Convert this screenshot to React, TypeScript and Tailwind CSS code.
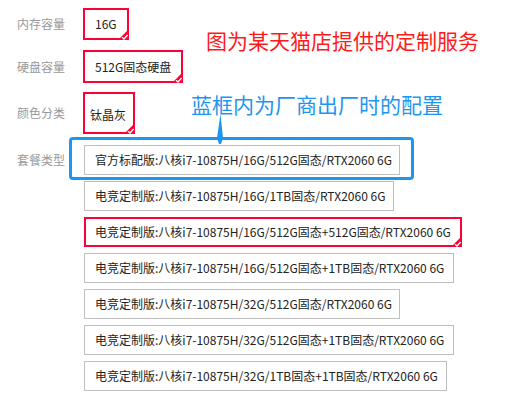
import React from "react";

const RED = "#ff0036";

function Check() {
  return (
    <svg
      className="absolute right-[-2px] bottom-[-2px]"
      width="12"
      height="12"
      viewBox="0 0 12 12"
    >
      <path d="M12 1 L12 12 L1 12 Z" fill={RED} />
      <path d="M5 9.2 L7 11 L10.6 7" stroke="#fff" strokeWidth="1.3" fill="none" />
    </svg>
  );
}

function Label({ children }: { children: React.ReactNode }) {
  return <div className="w-[66px] shrink-0 text-[12px] text-[#999]">{children}</div>;
}

const options = [
  { t: "官方标配版:八核i7-10875H/16G/512G固态/RTX2060 6G", w: 316, sel: false },
  { t: "电竞定制版:八核i7-10875H/16G/1TB固态/RTX2060 6G", w: 310, sel: false },
  { t: "电竞定制版:八核i7-10875H/16G/512G固态+512G固态/RTX2060 6G", w: 378, sel: true },
  { t: "电竞定制版:八核i7-10875H/16G/512G固态+1TB固态/RTX2060 6G", w: 370, sel: false },
  { t: "电竞定制版:八核i7-10875H/32G/512G固态/RTX2060 6G", w: 316, sel: false },
  { t: "电竞定制版:八核i7-10875H/32G/512G固态+1TB固态/RTX2060 6G", w: 370, sel: false },
  { t: "电竞定制版:八核i7-10875H/32G/1TB固态+1TB固态/RTX2060 6G", w: 363, sel: false },
];

export default function App() {
  return (
    <div
      className="relative w-[509px] h-[394px] overflow-hidden bg-white text-[#222]"
      style={{ fontFamily: "'Noto Sans CJK SC', 'Noto Sans', sans-serif" }}
    >
      <div className="flex flex-col pl-[17px] pt-[8px]">
        <div className="flex items-center h-[32px]">
          <Label>内存容量</Label>
          <div className="relative flex items-center h-[32px] border-2 border-[#ff0036] px-[10px] text-[12px]">
            16G
            <Check />
          </div>
        </div>
        <div className="flex items-center h-[33px] mt-[10px]">
          <Label>硬盘容量</Label>
          <div className="relative flex items-center h-[33px] border-2 border-[#ff0036] px-[10px] text-[12px]">
            512G固态硬盘
            <Check />
          </div>
        </div>
        <div className="flex items-center h-[42px] mt-[9px]">
          <Label>颜色分类</Label>
          <div className="relative flex items-center h-[42px] w-[52px] border-2 border-[#ff0036] pl-[5px] pt-[3px] text-[12px]">
            钛晶灰
            <Check />
          </div>
        </div>
        <div className="flex mt-[11px]">
          <div className="pt-[6px]">
            <Label>套餐类型</Label>
          </div>
          <div className="flex flex-col gap-[6px] ml-[1px]">
            {options.map((o, i) => (
              <div
                key={i}
                className={
                  o.sel
                    ? "relative flex items-center h-[30px] border-2 border-[#ff0036] pl-[9px] text-[12px] whitespace-nowrap"
                    : "relative flex items-center h-[30px] border border-[#bdbdbd] pl-[10px] text-[12px] whitespace-nowrap"
                }
                style={{ width: o.w }}
              >
                {o.t}
                {o.sel && <Check />}
              </div>
            ))}
          </div>
        </div>
      </div>

      {/* annotations */}
      <div className="absolute left-[206px] top-[28px] text-[21px] leading-[24px] text-[#ff1a1a] whitespace-nowrap">
        图为某天猫店提供的定制服务
      </div>
      <div className="absolute left-[191px] top-[92px] text-[21px] leading-[24px] text-[#1e96ef] whitespace-nowrap">
        蓝框内为厂商出厂时的配置
      </div>
      <div className="absolute left-[69px] top-[137px] w-[345px] h-[43px] border-[3px] border-[#1e96ef] rounded-[4px]" />
      <svg className="absolute left-[212px] top-[110px]" width="16" height="36" viewBox="0 0 16 36">
        <path d="M8.5 4 L11 28 L9 34 L7 34 L5 28 Z" fill="#1e96ef" />
      </svg>
    </div>
  );
}
